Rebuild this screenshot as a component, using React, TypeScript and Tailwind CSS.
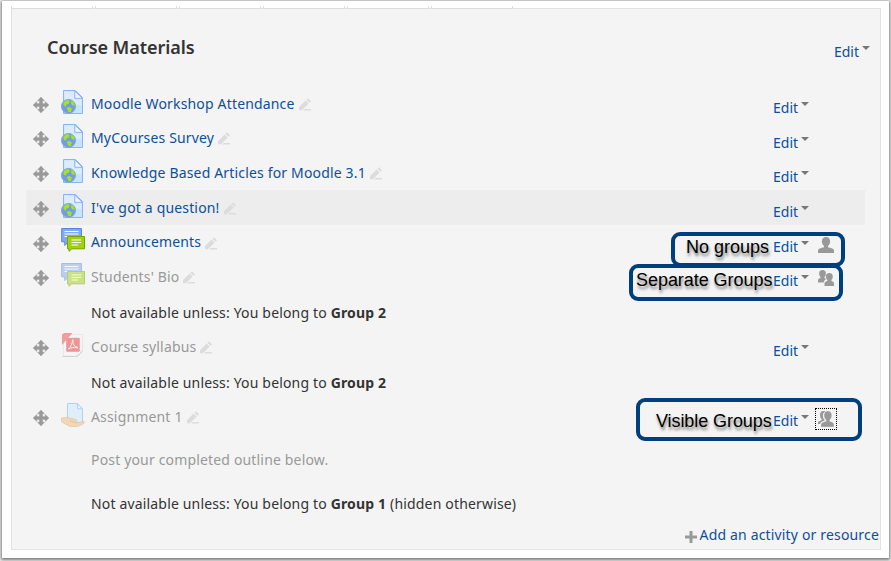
import React from 'react';

type Kind = 'url' | 'forum' | 'pdf' | 'assign';

function Move() {
  return (
    <svg className="mt-[11px] h-4 w-4 shrink-0" viewBox="0 0 16 16" fill="#999">
      <path d="M8 0l3.6 3.8H9.6v2.6h2.6V4.4L16 8l-3.8 3.6V9.6H9.6v2.6h2L8 16l-3.6-3.8h2V9.6H3.8v2L0 8l3.8-3.6v2h2.6V3.8h-2z" stroke="#999" strokeWidth=".3" />
    </svg>
  );
}

function Pencil() {
  return (
    <svg className="ml-1 mt-3 h-[13px] w-3 shrink-0" viewBox="0 0 12 13" fill="#dcdcdc">
      <path d="M0 12.2V9.2l6.6-6.6 3 3L3 12.2zM7.5 1.7L9 .3l3 2.9-1.5 1.5zM5.5 11H12v1.4H4.2z" />
    </svg>
  );
}

function Caret() {
  return (
    <svg className="ml-[3px] h-1 w-2 shrink-0" viewBox="0 0 8 4" fill="#777">
      <path d="M0 0h8L4 4z" />
    </svg>
  );
}

function ActivityIcon({ kind }: { kind: Kind }) {
  if (kind === 'url')
    return (
      <svg className="h-6 w-6" viewBox="0 0 24 24">
        <path d="M2.5.5h12l7 7v16h-19z" fill="#c6e4fb" stroke="#8ab4f8" />
        <path d="M3.5 1.5h9.5v8h7.5v6l-17-2z" fill="#d9edfd" />
        <path d="M13.8 1v7.3h7.4z" fill="#f1f8ff" stroke="#8ab4f8" />
        <circle cx="7.5" cy="16.4" r="7" fill="#6f9de6" stroke="#7fa6e6" />
        <path d="M2.5 12.5l3.8-2.8 2.6 1.5-.9 2.3-2.4 1-.9 2.2-2.2-1.5zM10.5 10.2l2.5 2.3.9 3.3-2.4-.4-1.5-2zM5.8 18l2.4-1.2 2.8 2-1.3 3.2H7.5z" fill="#a8e315" />
      </svg>
    );
  if (kind === 'forum')
    return (
      <svg className="h-6 w-6" viewBox="0 0 24 24">
        <path d="M.7.5h19.8v13.3H7.5L3.8 17.5v-3.7H.7z" fill="#82aaf0" stroke="#5685da" />
        <path d="M3.5 3.5h14M3.5 6h14M3.5 8.5h9" stroke="#fff" strokeWidth="1.2" />
        <path d="M6.5 8.5h17v12.3H10.8L8 23.3v-2.5H6.5z" fill="#a1d111" stroke="#75a500" />
        <path d="M10.5 12h9.5M10.5 14.5h9.5M10.5 17h6.5" stroke="#fff" strokeWidth="1.2" />
      </svg>
    );
  if (kind === 'pdf')
    return (
      <svg className="h-6 w-6" viewBox="0 0 24 24">
        <path d="M2.5 1.5h19v16l-5 6h-14z" fill="#f6f6f6" stroke="#ddd" />
        <path d="M1.5 23.4h15l5-5" fill="none" stroke="#aaa" />
        <path d="M16 23l.7-4.5 4.8-1z" fill="#fff" stroke="#ccc" strokeWidth=".7" />
        <path d="M1 1.5L3 0h8.5L1 12z" fill="#ed4a40" />
        <path d="M5.8 5.3h12.4v12.9H5.8z" fill="#ee3535" stroke="#d04040" />
        <path d="M7.5 16c2-1.5 4-6 4-8.5 0-1.5 1-1 .5 1-.5 3 2 5.5 4.4 5.7 1.2.1.4 1-.8.6-2.7-.8-4.9-.2-8.1 1.2z" fill="none" stroke="#fff" strokeWidth=".9" />
      </svg>
    );
  return (
    <svg className="h-6 w-6" viewBox="0 0 24 24">
      <path d="M6.5.5h10l5 5v14.5h-15z" fill="#ccecff" stroke="#78a9ef" />
      <path d="M16.5 1v4.8h5z" fill="#eef9ff" stroke="#78a9ef" />
      <path d="M0 15.3l6-1 8 2c3 1 2.5 3-.2 2.6l-5-1 5 1.6c3 .8 6-.5 9-1.3 1 .5.5 1.8-.5 2.5-4 2.8-10 4.2-14 2.4L.5 18.8z" fill="#f0bb7c" stroke="#d19a5a" strokeWidth=".8" />
    </svg>
  );
}

function Person() {
  return (
    <svg className="h-4 w-4" viewBox="0 0 16 16" fill="#999">
      <path d="M8 0c2.7 0 4.1 1.7 4.1 4.2 0 2-.8 3.7-2.1 4.7v1.3c2.6.7 5.2 1 6 2.7V16H0v-3.1c.8-1.7 3.4-2 6-2.7V8.9C4.7 7.9 3.9 6.2 3.9 4.2 3.9 1.7 5.3 0 8 0z" />
    </svg>
  );
}

function People({ close }: { close?: boolean }) {
  return close ? (
    <svg className="h-4 w-4" viewBox="0 0 16 16" fill="#999">
      <path d="M5.5 0c.8 0 1.4.1 1.9.5C5.4 1.4 4.7 3.2 5 5.6c.2 1.6.7 2.7 1.5 3.5v.7c-2.3.6-4 1.2-4.4 3.2H0v-1.7c.8-1.2 2.3-1.5 3.6-2V8.2C2.6 7.2 2 5.8 2 4 2 1.5 3.3 0 5.5 0z" />
      <path d="M9.9 0c2.5 0 3.9 1.6 3.9 4.2 0 2-.8 3.7-2 4.7v1.3c2 .5 3.6 1 4.2 2.7V16H3v-3.1c.7-1.7 2.8-2.2 5-2.7V8.9c-1.2-1-2-2.7-2-4.7C6 1.6 7.4 0 9.9 0z" stroke="#f4f4f4" strokeWidth=".4" />
    </svg>
  ) : (
    <svg className="h-4 w-4" viewBox="0 0 16 16" fill="#999">
      <path d="M4.5 0c2.2 0 3.4 1.4 3.4 3.6 0 1.5-.5 2.8-1.4 3.5v1l1.6.8c-1.1.9-2 1.5-2.3 3.6H0V9.8c.4-1.2 1.4-1.5 2.5-1.9v-1C1.6 6.2 1.1 5 1.1 3.5 1.1 1.4 2.3 0 4.5 0z" />
      <path d="M11.4 3c2.2 0 3.4 1.4 3.4 3.4 0 1.5-.5 2.8-1.4 3.5v1c1.2.4 2.2.8 2.6 2.1v3H6.5v-3c.4-1.3 1.6-1.7 2.8-2.1v-1c-.9-.7-1.4-2-1.4-3.5C7.9 4.4 9.2 3 11.4 3z" />
    </svg>
  );
}

const Edit = () => (
  <span className="flex items-start">
    <span className="leading-5 tracking-normal text-[#0f4f98]">Edit</span>
    <span className="mt-1 flex"><Caret /></span>
  </span>
);

interface RowProps {
  kind: Kind;
  name: string;
  dim?: boolean;
  active?: boolean;
  height: string;
  iconTop?: string;
  nameTop?: string;
  editTop?: string;
  group?: React.ReactNode;
}

function Row({ kind, name, dim, active, height, group, iconTop = 'mt-1', nameTop = 'mt-2', editTop = 'mt-3' }: RowProps) {
  return (
    <div className={`ml-[14px] flex w-[839px] items-start pl-[7px] ${height} ${active ? 'bg-[#ededed]' : ''}`}>
      <Move />
      <span className={`ml-3 w-[30px] shrink-0 ${iconTop} ${dim ? 'opacity-50' : ''}`}><ActivityIcon kind={kind} /></span>
      <a className={`leading-5 ${nameTop} ${dim ? 'text-[#999]' : 'text-[#0f4f98]'}`}>{name}</a>
      <Pencil />
      <div className={`ml-auto flex w-[92px] items-start ${editTop}`}>
        <Edit />
        {group}
      </div>
    </div>
  );
}

function Availability({ group, suffix = '', height }: { group: string; suffix?: string; height: string }) {
  return (
    <p className={`pl-[79px] pt-[9px] leading-5 text-[#333] ${height}`}>
      Not available unless: You belong to <b className="font-bold">{group}</b>{suffix}
    </p>
  );
}

function Callout({ box, label, children }: { box: string; label: string; children: string }) {
  return (
    <>
      <div className={`absolute rounded-[9px] border-4 border-[#003f7f] ${box}`} />
      <span className={`absolute font-['Liberation_Sans',Arial,sans-serif] text-[18px] leading-5 text-black [text-shadow:1px_3px_3px_rgba(0,0,0,0.5)] ${label}`}>{children}</span>
    </>
  );
}

const tab = 'w-[82px] border-x border-b border-[#ddd]';

export default function App() {
  return (
    <div className="relative h-[561px] w-[891px] overflow-hidden whitespace-nowrap bg-[#f4f4f4] pl-[2px] pt-px font-['Noto_Sans',sans-serif] text-[14px] tracking-[0.165px]">
      <main className="h-[557px] w-[887px] bg-white pl-[9px] pt-[5px] shadow-[0_1px_3px_1px_#777]">
        <div className="relative -mb-px flex h-[3px] gap-[2px]">
          <i className={tab} />
          <i className={tab} />
          <i className={tab} />
          <i className={tab} />
          <i className={tab} />
          <i className={tab} />
        </div>
        <section className="h-[542px] w-[870px] border border-[#e3e3e3] bg-[#f4f4f4]">
          <header className="flex h-[77px] items-start justify-between pl-[35px] pr-[10px]">
            <h2 className="mt-[26px] text-[18px] font-semibold leading-6 tracking-[-0.05px] text-[#333]">Course Materials</h2>
            <div className="mt-[33px]"><Edit /></div>
          </header>
          <Row kind="url" name="Moodle Workshop Attendance" height="h-[34px]" />
          <Row kind="url" name="MyCourses Survey" height="h-[35px]" editTop="mt-[13px]" />
          <Row kind="url" name="Knowledge Based Articles for Moodle 3.1" height="h-[35px]" />
          <Row kind="url" name="I've got a question!" height="h-[35px]" active />
          <Row
            kind="forum"
            name="Announcements"
            height="h-[34px]"
            iconTop="mt-[3px]"
            nameTop="mt-[7px]"
            group={<span className="ml-[9px]"><Person /></span>}
          />
          <Row kind="forum" name="Students' Bio" height="h-[35px]" dim group={<span className="-mt-px ml-[9px]"><People /></span>} />
          <Availability group="Group 2" height="h-[35px]" />
          <Row kind="pdf" name="Course syllabus" height="h-[35px]" dim />
          <Availability group="Group 2" height="h-[35px]" />
          <Row
            kind="assign"
            name="Assignment 1"
            height="h-[42px]"
            dim
            group={<span className="-mt-[3px] ml-[6px] border border-dotted border-black p-[2px]"><People close /></span>}
          />
          <p className="h-[44px] pl-[79px] pt-[9px] leading-5 text-[#999]">Post your completed outline below.</p>
          <Availability group="Group 1" suffix=" (hidden otherwise)" height="h-[40px]" />
          <div className="flex items-center justify-end pr-px text-[#0f4f98]">
            <svg className="mr-[3px] mt-[3px] h-3 w-3" viewBox="0 0 12 12"><path d="M6 0v12M0 6h12" stroke="#999" strokeWidth="3" /></svg>
            <a className="leading-5">Add an activity or resource</a>
          </div>
        </section>
      </main>
      <Callout box="left-[671px] top-[232px] h-[35px] w-[174px]" label="left-[686px] top-[237px] tracking-normal">No groups</Callout>
      <Callout box="left-[629px] top-[264px] h-[37px] w-[214px]" label="left-[636px] top-[270px] tracking-[-0.05px]">Separate Groups</Callout>
      <Callout box="left-[636px] top-[398px] h-[43px] w-[226px]" label="left-[656px] top-[411px] tracking-[-0.08px]">Visible Groups</Callout>
    </div>
  );
}
